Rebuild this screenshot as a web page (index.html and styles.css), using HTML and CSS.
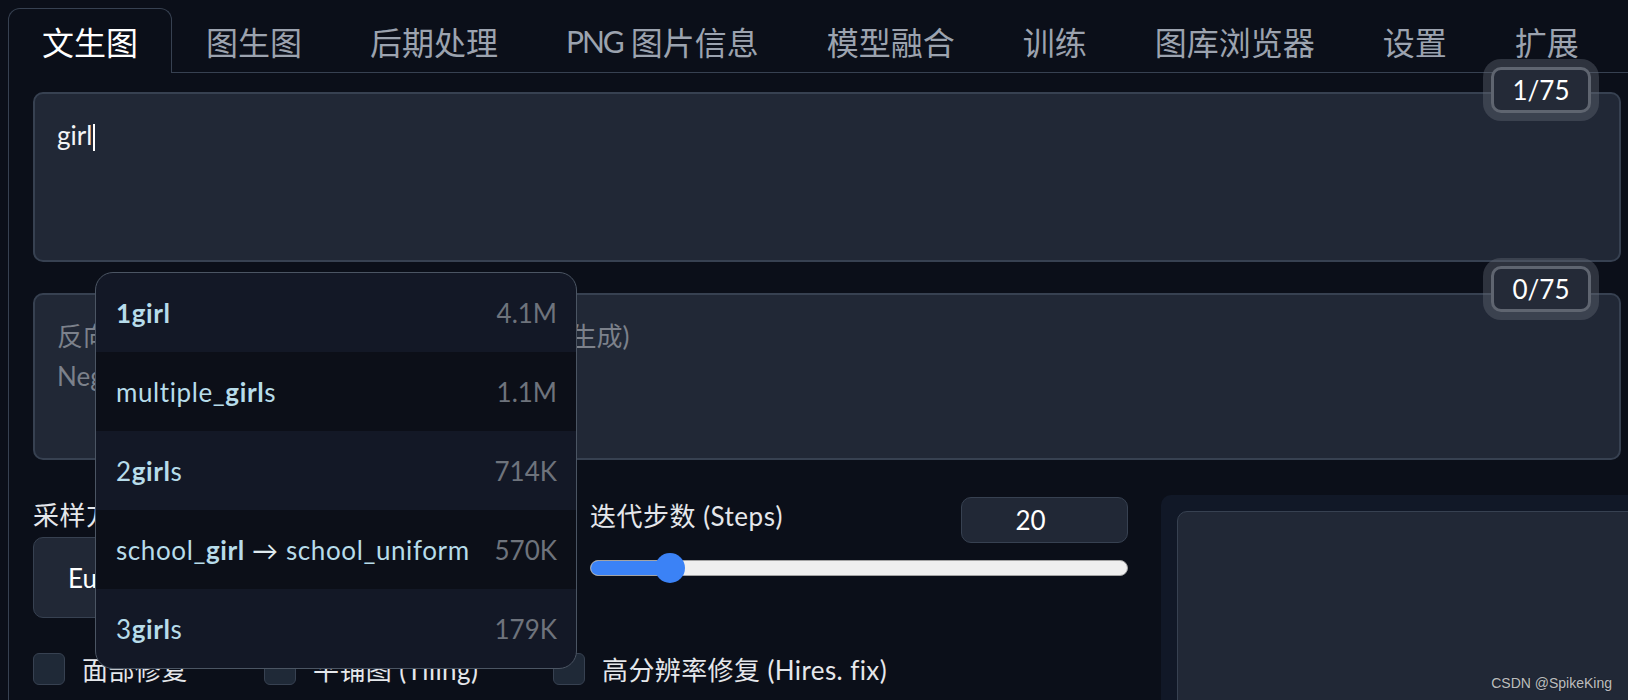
FILE: index.html
```html
<!DOCTYPE html>
<html lang="zh-CN">
<head>
<meta charset="utf-8">
<title>Stable Diffusion WebUI</title>
<link rel="stylesheet" href="styles.css">
</head>
<body>
<div class="app">
  <nav class="tabs">
    <div class="tab active">文生图</div>
    <div class="tab">图生图</div>
    <div class="tab">后期处理</div>
    <div class="tab"><span class="latin">PNG</span> 图片信息</div>
    <div class="tab">模型融合</div>
    <div class="tab">训练</div>
    <div class="tab">图库浏览器</div>
    <div class="tab">设置</div>
    <div class="tab">扩展</div>
  </nav>
  <main class="panel">
    <div class="prompt-box">
      <div class="token-counter">1/75</div>
      <div class="textarea">girl<span class="caret"></span></div>
    </div>
    <div class="prompt-box neg">
      <div class="token-counter">0/75</div>
      <div class="textarea placeholder">反向提示词（按 Ctrl+Enter 或 Alt+Enter 开始生成)<br>Negative prompt</div>
    </div>
    <div class="settings">
      <div class="sampler">
        <div class="label">采样方法 (Sampler)</div>
        <div class="select">Euler a</div>
      </div>
      <div class="steps">
        <div class="steps-head">
          <span class="label steps-label">迭代步数 (Steps)</span>
          <div class="number">20</div>
        </div>
        <div class="slider" style="--v:0.1275">
          <div class="track"><div class="fill"></div></div>
          <div class="thumb"></div>
        </div>
      </div>
      <div class="gallery"><div class="gallery-inner"></div></div>
      <div class="checks">
        <label class="check"><span class="box"></span>面部修复</label>
        <label class="check"><span class="box"></span>平铺图 (Tiling)</label>
        <label class="check"><span class="box"></span>高分辨率修复 (Hires. fix)</label>
      </div>
    </div>
  </main>
  <div class="autocomplete">
    <div class="ac-row"><span class="ac-tag"><b>1girl</b></span><span class="ac-count">4.1M</span></div>
    <div class="ac-row"><span class="ac-tag">multiple_<b>girl</b>s</span><span class="ac-count">1.1M</span></div>
    <div class="ac-row"><span class="ac-tag">2<b>girl</b>s</span><span class="ac-count">714K</span></div>
    <div class="ac-row"><span class="ac-tag">school_<b>girl</b> <span class="arrow">→</span> school_uniform</span><span class="ac-count">570K</span></div>
    <div class="ac-row"><span class="ac-tag">3<b>girl</b>s</span><span class="ac-count">179K</span></div>
  </div>
  <div class="watermark">CSDN @SpikeKing</div>
</div>
</body>
</html>
```

FILE: styles.css
```css
* {
  box-sizing: border-box;
}

html,
body {
  margin: 0;
  background: #0b0f19;
}

body {
  width: 1628px;
  height: 700px;
  overflow: hidden;
  font-family: "Lato", "Noto Sans CJK SC", sans-serif;
  color: #e5e7eb;
}

.app {
  position: relative;
  height: 700px;
  overflow: hidden;
  padding: 8px 0 0 8px;
}

/* ---------- tabs ---------- */
.tabs {
  display: flex;
  align-items: flex-start;
  height: 65px;
  border-bottom: 1px solid #374151;
}

.tab {
  display: flex;
  align-items: center;
  height: 64px;
  padding: 0 33px;
  font-size: 32px;
  color: #9ca3af;
  border: 1px solid transparent;
  border-bottom: 0;
  border-radius: 12px 12px 0 0;
  white-space: pre;
}

.tab .latin {
  font-size: 30px;
  letter-spacing: -2.1px;
}

.tab.active {
  height: 65px;
  margin-bottom: -1px;
  color: #ffffff;
  background: #0b0f19;
  border-color: #374151;
}

/* ---------- main panel ---------- */
.panel {
  height: 627px;
  padding: 19px 0 0 24px;
  border-left: 1px solid #374151;
}

.prompt-box {
  position: relative;
  width: 1588px;
}

.textarea {
  height: 170px;
  padding: 21px 22px;
  background: #212836;
  border: 2px solid #374151;
  border-radius: 10px;
  font-size: 26px;
  line-height: 40px;
  color: #f3f4f6;
}

.caret {
  display: inline-block;
  width: 2px;
  height: 27px;
  margin-left: 1px;
  background: #ffffff;
  vertical-align: -6px;
}

.neg {
  margin-top: 31px;
}

.neg .textarea {
  height: 167px;
}

.placeholder {
  color: #7c818b;
  white-space: nowrap;
  overflow: hidden;
}

.token-counter {
  position: absolute;
  top: -25px;
  right: 30px;
  z-index: 1;
  display: flex;
  align-items: center;
  justify-content: center;
  width: 100px;
  height: 46px;
  background: #242a37;
  border: 3px solid #5f6570;
  border-radius: 10px;
  box-shadow: 0 0 0 8px rgba(100, 106, 118, 0.4);
  font-size: 26px;
  color: #ffffff;
}

.neg .token-counter {
  top: -27px;
}

/* ---------- settings ---------- */
.settings {
  display: grid;
  grid-template-columns: 533px 538px 520px;
  grid-template-rows: 123px 32px;
  column-gap: 24px;
  row-gap: 32px;
  margin-top: 35px;
  width: 1700px;
}

.label {
  font-size: 26px;
  line-height: 40px;
  color: #e5e7eb;
  white-space: nowrap;
  letter-spacing: 0.5px;
}

.select {
  display: flex;
  align-items: center;
  height: 81px;
  margin-top: 2px;
  padding-left: 34px;
  background: #212836;
  border: 1px solid #374151;
  border-radius: 10px;
  font-size: 26px;
  color: #ffffff;
}

.steps-head {
  display: flex;
  justify-content: space-between;
  align-items: flex-start;
  padding-top: 2px;
}

.steps-label {
  line-height: 38px;
}

.number {
  display: flex;
  align-items: center;
  justify-content: center;
  width: 167px;
  height: 46px;
  padding-right: 28px;
  background: #212836;
  border: 1px solid #374151;
  border-radius: 10px;
  font-size: 26px;
  color: #ffffff;
}

.slider {
  position: relative;
  height: 30px;
  margin-top: 10px;
}

.track {
  position: absolute;
  left: 0;
  right: 0;
  top: 7px;
  height: 16px;
  background: #efefef;
  border: 1.5px solid #a3a3a3;
  border-radius: 8px;
  overflow: hidden;
}

.fill {
  width: calc(15px + var(--v) * (100% - 30px));
  height: 100%;
  background: #3b82f6;
}

.thumb {
  position: absolute;
  top: 0;
  left: calc(var(--v) * (100% - 30px));
  width: 30px;
  height: 30px;
  border-radius: 50%;
  background: #3b82f6;
}

.gallery {
  grid-column: 3;
  grid-row: 1 / span 2;
  align-self: start;
  height: 260px;
  margin-left: 9px;
  padding: 16px 0 0 16px;
  background: #111827;
  border-radius: 10px;
}

.gallery-inner {
  height: 300px;
  background: #212836;
  border: 1px solid #374151;
  border-radius: 10px;
}

.checks {
  grid-column: 1 / span 2;
  grid-row: 2;
  display: grid;
  grid-template-columns: 231px 289px auto;
  align-items: center;
}

.check {
  display: flex;
  align-items: center;
  gap: 17px;
  font-size: 26px;
  color: #e5e7eb;
  white-space: nowrap;
  letter-spacing: 0.4px;
}

.box {
  flex: none;
  width: 32px;
  height: 32px;
  background: #1f2937;
  border: 1px solid #374151;
  border-radius: 6px;
}

/* ---------- autocomplete popup ---------- */
.autocomplete {
  position: absolute;
  left: 95px;
  top: 272px;
  z-index: 5;
  width: 482px;
  background: #131826;
  border: 1px solid #4b5563;
  border-radius: 18px;
  overflow: hidden;
}

.ac-row {
  display: flex;
  align-items: center;
  justify-content: space-between;
  height: 79px;
  padding: 0 19px 0 20px;
  font-size: 26px;
}

.ac-row:nth-child(even) {
  background: #0c0f18;
}

.ac-tag {
  color: #b7dcea;
  white-space: nowrap;
  letter-spacing: 0.6px;
}

.ac-tag b {
  font-weight: 700;
}

.arrow {
  color: #dfe9ee;
}

.ac-count {
  color: #6e737c;
}

.watermark {
  position: absolute;
  right: 16px;
  bottom: 9px;
  z-index: 6;
  font-family: "Liberation Sans", sans-serif;
  font-size: 14px;
  color: rgba(235, 235, 235, 0.8);
  text-shadow: 0 0 1px rgba(0, 0, 0, 0.6);
}
```
